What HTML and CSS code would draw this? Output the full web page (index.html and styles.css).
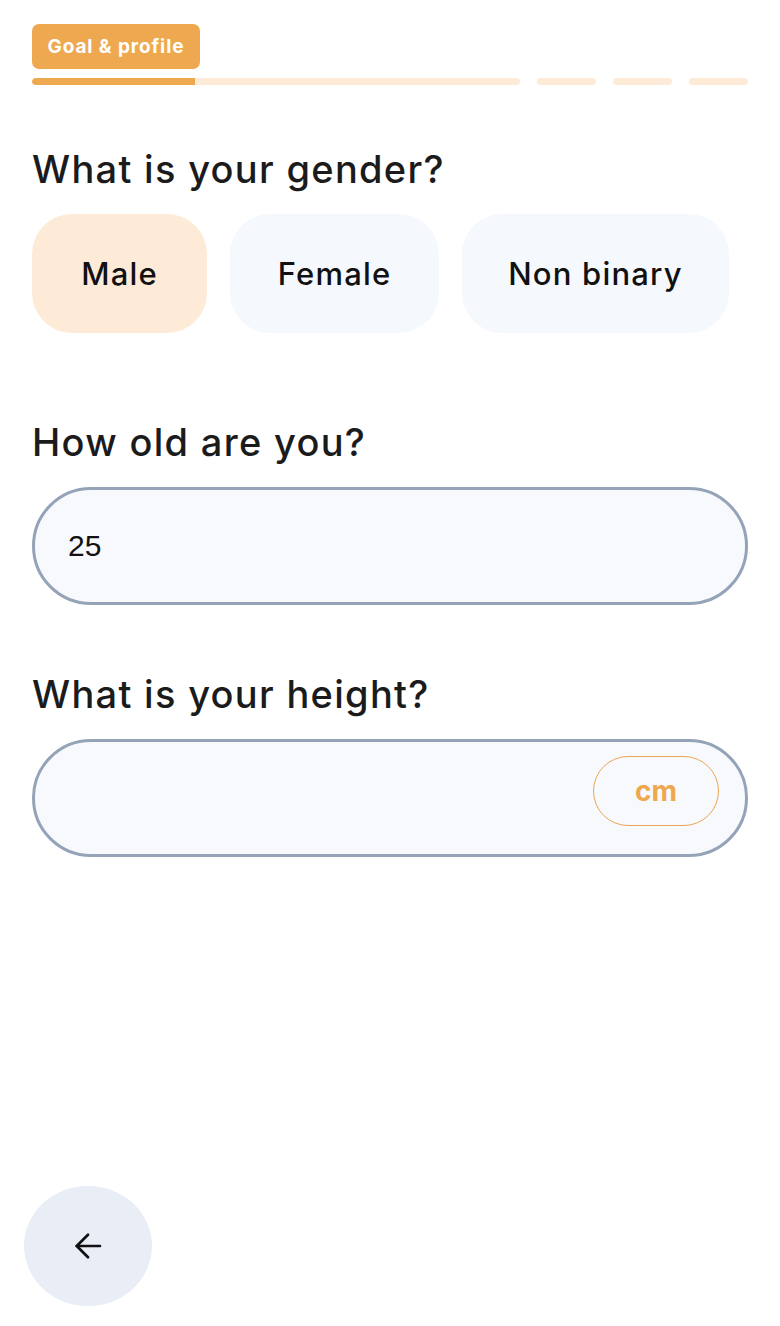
FILE: index.html
```html
<!DOCTYPE html>
<html>
<head>
<meta charset="utf-8">
<link rel="stylesheet" href="styles.css">
</head>
<body>
<div class="page">
  <header class="top">
    <span class="badge">Goal &amp; profile</span>
    <div class="progress">
      <div class="seg seg-main"><div class="fill" style="width:33.3%"></div></div>
      <div class="seg seg-small"></div>
      <div class="seg seg-small"></div>
      <div class="seg seg-small"></div>
    </div>
  </header>

  <section class="q q-gender">
    <h2 class="q-title">What is your gender?</h2>
    <div class="options">
      <button class="opt opt-selected opt-male">Male</button>
      <button class="opt opt-female">Female</button>
      <button class="opt opt-nb">Non binary</button>
    </div>
  </section>

  <section class="q q-age">
    <h2 class="q-title">How old are you?</h2>
    <div class="field"><span class="field-value">25</span></div>
  </section>

  <section class="q q-height">
    <h2 class="q-title">What is your height?</h2>
    <div class="field field-unit"><span class="field-value"></span><span class="unit">cm</span></div>
  </section>

  <div class="spacer"></div>

  <footer class="bottom">
    <button class="back" aria-label="Back">
      <svg width="36" height="36" viewBox="0 0 24 24" fill="none" stroke="#111" stroke-width="1.8" stroke-linecap="round" stroke-linejoin="round"><path d="M20 12H4.5"/><path d="M12 4.5L4.5 12 12 19.5"/></svg>
    </button>
  </footer>
</div>
</body>
</html>
```

FILE: styles.css
```css
* { box-sizing: border-box; }
html, body { margin: 0; padding: 0; background: #fff; }
body {
  font-family: Inter, "Noto Sans", "Liberation Sans", sans-serif;
  color: #1a1a1a;
}
.page {
  width: 780px;
  height: 1326px;
  display: flex;
  flex-direction: column;
  padding: 24px 32px 20px 32px;
}
.top { display: flex; flex-direction: column; align-items: flex-start; }
.badge {
  background: #eea950;
  color: #fff;
  font-weight: 700;
  font-size: 19px;
  letter-spacing: 0.9px;
  height: 45px;
  width: 168px;
  display: flex;
  align-items: center;
  justify-content: center;
  border-radius: 7px;
}
.progress {
  margin-top: 9px;
  width: 100%;
  display: flex;
  gap: 17px;
  height: 7px;
}
.seg { background: #fdebd8; border-radius: 4px; height: 7px; overflow: hidden; }
.seg-main { flex: 1; }
.seg-small { width: 59px; }
.fill { height: 100%; background: #eea950; border-radius: 4px 0 0 4px; }

.q-title {
  margin: 0;
  font-weight: 500;
  font-size: 38px;
  line-height: 44px;
  letter-spacing: 1.3px;
  color: #1b1b1b;
}
.q-gender { margin-top: 62px; }
.q-gender .q-title { margin-bottom: 23px; }
.options { display: flex; gap: 23px; }
.opt {
  font-family: inherit;
  border: none;
  height: 119px;
  border-radius: 40px;
  background: #f5f8fc;
  font-size: 31px;
  font-weight: 500;
  letter-spacing: 1.2px;
  color: #111;
  padding: 0;
}
.opt-male { width: 175px; }
.opt-female { width: 209px; }
.opt-nb { width: 267px; }
.opt-selected { background: #fdebd8; }

.q-age { margin-top: 87px; }
.q-height { margin-top: 67px; }
.q-age .q-title, .q-height .q-title { margin-bottom: 23px; }

.field {
  height: 118px;
  border: 3px solid #94a3b8;
  border-radius: 60px;
  background: #f7f9fc;
  display: flex;
  align-items: center;
  justify-content: space-between;
  padding: 0 26px 0 33px;
}
.field-value { font-family: "Liberation Sans", Arial, sans-serif; font-size: 30px; font-weight: 400; color: #111; }
.unit {
  width: 126px;
  height: 70px;
  margin-bottom: 14px;
  border: 1.5px solid #eaa654;
  border-radius: 35px;
  display: flex;
  align-items: center;
  justify-content: center;
  color: #eea950;
  font-weight: 700;
  font-size: 28px;
}
.spacer { flex: 1; }
.bottom { display: flex; margin-left: -8px; }
.back {
  width: 128px;
  height: 120px;
  border-radius: 50%;
  border: none;
  background: #e8edf6;
  display: flex;
  align-items: center;
  justify-content: center;
  padding: 0;
}
```
